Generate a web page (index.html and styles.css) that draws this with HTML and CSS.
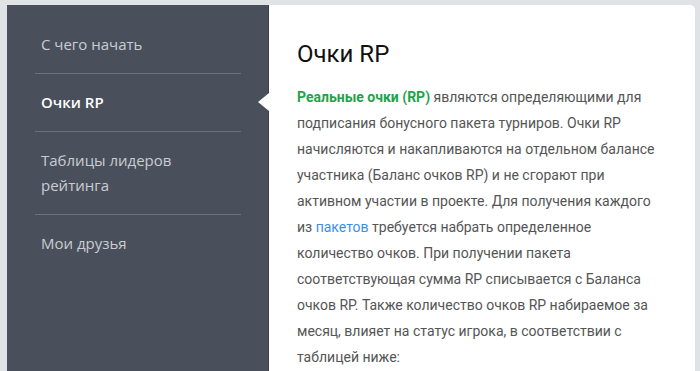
FILE: index.html
```html
<!DOCTYPE html>
<html lang="ru">
<head>
  <meta charset="UTF-8">
  <meta name="viewport" content="width=device-width, initial-scale=1.0">
  <title>Очки RP</title>
  <link rel="stylesheet" href="styles.css">
</head>
<body>
  <div class="layout">
    <!-- Side menu -->
    <nav class="sidebar">
      <a class="menu-item" href="#">С чего начать</a>
      <a class="menu-item active" href="#">Очки RP</a>
      <a class="menu-item" href="#">Таблицы лидеров рейтинга</a>
      <a class="menu-item last" href="#">Мои друзья</a>
    </nav>

    <!-- Content -->
    <main class="content">
      <h1>Очки RP</h1>
      <p class="text">
        <strong class="accent">Реальные очки (RP)</strong> являются определяющими для
        подписания бонусного пакета турниров. Очки RP начисляются и накапливаются на отдельном балансе
        участника (Баланс очков RP) и не сгорают при активном участии в проекте. Для получения каждого
        из <a href="#" class="link">пакетов</a> требуется набрать определенное количество очков. При получении пакета
        соответствующая сумма RP списывается с Баланса очков RP. Также количество очков RP набираемое за
        месяц, влияет на статус игрока, в соответствии с таблицей ниже:
      </p>
    </main>
  </div>
</body>
</html>
```

FILE: styles.css
```css
body {
  font-family: 'Open Sans', 'Noto Sans', sans-serif;
  margin: 0;
  padding: 0;
  background-color: #dfe3e6;
  height: 371px;
  overflow: hidden;
}

.layout {
  display: flex;
  margin: 5px 5px 0 7px;
  height: 366px;
}

.sidebar {
  width: 233px;
  flex-shrink: 0;
  background-color: #4a505b;
  border-right: 1px solid #3a4049;
  padding: 11px 0 0 28px;
  display: flex;
  flex-direction: column;
}

.menu-item {
  display: block;
  width: 200px;
  padding: 16px 0 16px 6px;
  color: #c9cdd3;
  font-size: 15px;
  line-height: 25px;
  text-decoration: none;
  border-bottom: 1px solid #6a717b;
}

.menu-item.last {
  border-bottom: none;
}

.menu-item.active {
  color: #ffffff;
  font-weight: 600;
}

.content {
  position: relative;
  flex: 1;
  background: white;
  border-radius: 0 5px 0 0;
  padding: 32px 28px 0 28px;
  color: #555;
  font-family: Roboto, 'Open Sans', sans-serif;
}

/* pointer to the active menu item */
.content:before {
  content: "";
  position: absolute;
  left: -11px;
  top: 88px;
  border-style: solid;
  border-width: 9px 11px 9px 0;
  border-color: transparent white transparent transparent;
}

h1 {
  font-size: 24px;
  font-weight: 400;
  color: #111;
  margin: 0 0 13px 0;
  line-height: 34px;
}

.text {
  font-size: 14px;
  line-height: 26px;
  margin: 0;
}

.accent {
  color: #1fa34a;
  font-weight: 700;
}

.link {
  color: #3d8fe6;
  text-decoration: none;
}
```
